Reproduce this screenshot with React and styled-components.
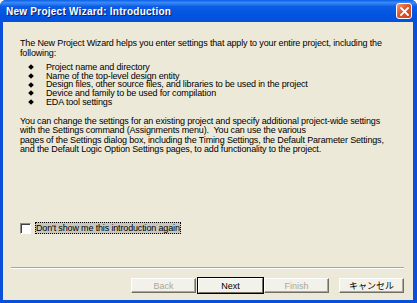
import React from "react";
import styled, { createGlobalStyle } from "styled-components";

const GlobalStyle = createGlobalStyle`
  html, body {
    margin: 0;
    padding: 0;
    background: #ffffff;
  }
`;

const Window = styled.div`
  width: 417px;
  height: 303px;
  display: flex;
  flex-direction: column;
  background: #0a4fd9;
  border-radius: 6px 6px 0 0;
  overflow: hidden;
  font-family: "Liberation Sans", Arial, sans-serif;
`;

const TitleBar = styled.div`
  height: 22px;
  flex: none;
  display: flex;
  align-items: center;
  justify-content: space-between;
  padding: 0 5px 0 6px;
  background: linear-gradient(
    to bottom,
    #0a5fe8 0%,
    #3d8bf7 12%,
    #0b5ce6 30%,
    #0053e0 70%,
    #0550dc 100%
  );
`;

const Title = styled.span`
  color: #ffffff;
  font-family: "Liberation Sans", Arial, sans-serif;
  font-weight: bold;
  font-size: 10px;
  letter-spacing: 0.25px;
  text-shadow: 1px 1px 0 #0a1e6e;
`;

const CloseButton = styled.div`
  width: 16px;
  height: 16px;
  border: 1px solid #ffffff;
  border-radius: 3px;
  box-sizing: border-box;
  background: linear-gradient(135deg, #f29a78 0%, #e2552a 45%, #c9421b 100%);
  display: flex;
  align-items: center;
  justify-content: center;
`;

const Body = styled.div`
  flex: 1;
  margin: 0 4px 3px 3px;
  background: #ece9d8;
  display: flex;
  flex-direction: column;
  font-size: 9px;
  letter-spacing: -0.15px;
  color: #000000;
`;

const Content = styled.div`
  padding: 16px 0 0 17px;
  white-space: nowrap;
`;

const Para = styled.p`
  margin: 0 0 ${({ $gap }) => $gap || 0}px 0;
  line-height: ${({ $lh }) => $lh}px;
`;

const List = styled.ul`
  list-style: none;
  margin: 0 0 10.5px 0;
  padding: 0;
`;

const Item = styled.li`
  display: flex;
  align-items: center;
  height: 8.7px;
  line-height: 8.7px;
`;

const Bullet = styled.span`
  width: 4px;
  height: 4px;
  background: #000000;
  transform: rotate(45deg);
  margin: 0 13px 0 9px;
`;

const Spacer = styled.div`
  flex: 1;
`;

const CheckRow = styled.label`
  display: flex;
  align-items: center;
  padding-left: 17px;
  gap: 4px;
`;

const Box = styled.span`
  width: 11px;
  height: 11px;
  box-sizing: border-box;
  background: #ffffff;
  border-top: 1px solid #8e8c83;
  border-left: 1px solid #8e8c83;
  border-bottom: 1px solid #ffffff;
  border-right: 1px solid #ffffff;
  box-shadow: inset 1px 1px 0 #404040;
`;

const CheckLabel = styled.span`
  padding: 1px 1px;
  background: #c8c6bd;
  outline: 1px dotted #000000;
  outline-offset: -1px;
  line-height: 10px;
`;

const Separator = styled.div`
  margin: 33px 9px 9px 8px;
  height: 0;
  border-top: 1px solid #aca899;
  border-bottom: 1px solid #ffffff;
`;

const ButtonRow = styled.div`
  display: flex;
  justify-content: flex-end;
  padding: 0 9px 7px 0;
`;

const Button = styled.button`
  width: 65px;
  height: 15px;
  margin-left: ${({ $gap }) => $gap || 0}px;
  padding: 0;
  box-sizing: border-box;
  background: #f2f1ea;
  font-family: "Liberation Sans", "Noto Sans CJK JP", sans-serif;
  font-size: 9px;
  line-height: 12px;
  color: ${({ disabled }) => (disabled ? "#aca899" : "#000000")};
  border-top: 1px solid #ffffff;
  border-left: 1px solid #ffffff;
  border-right: 1px solid #716f64;
  border-bottom: 1px solid #716f64;
  box-shadow: ${({ $primary }) =>
    $primary ? "0 0 0 1px #000000" : "inset -1px -1px 0 #aca899"};
  position: relative;
  z-index: ${({ $primary }) => ($primary ? 1 : 0)};
`;

const bullets = [
  "Project name and directory",
  "Name of the top-level design entity",
  "Design files, other source files, and libraries to be used in the project",
  "Device and family to be used for compilation",
  "EDA tool settings",
];

export default function App() {
  return (
    <>
      <GlobalStyle />
      <Window>
        <TitleBar>
          <Title>New Project Wizard: Introduction</Title>
          <CloseButton>
            <svg width="9" height="9" viewBox="0 0 9 9">
              <path
                d="M1 1 L8 8 M8 1 L1 8"
                stroke="#ffffff"
                strokeWidth="1.8"
                strokeLinecap="square"
              />
            </svg>
          </CloseButton>
        </TitleBar>
        <Body>
          <Content>
            <Para $lh={10} $gap={5}>
              The New Project Wizard helps you enter settings that apply to
              your entire project, including the
              <br />
              following:
            </Para>
            <List>
              {bullets.map((b) => (
                <Item key={b}>
                  <Bullet />
                  {b}
                </Item>
              ))}
            </List>
            <Para $lh={9.5}>
              You can change the settings for an existing project and specify
              additional project-wide settings
              <br />
              with the Settings command (Assignments menu). &nbsp;You can use
              the various
              <br />
              pages of the Settings dialog box, including the Timing Settings,
              the Default Parameter Settings,
              <br />
              and the Default Logic Option Settings pages, to add functionality
              to the project.
            </Para>
          </Content>
          <Spacer />
          <CheckRow>
            <Box />
            <CheckLabel>Don't show me this introduction again</CheckLabel>
          </CheckRow>
          <Separator />
          <ButtonRow>
            <Button disabled>Back</Button>
            <Button $primary $gap={2}>
              Next
            </Button>
            <Button disabled $gap={1}>
              Finish
            </Button>
            <Button $gap={10}>キャンセル</Button>
          </ButtonRow>
        </Body>
      </Window>
    </>
  );
}
